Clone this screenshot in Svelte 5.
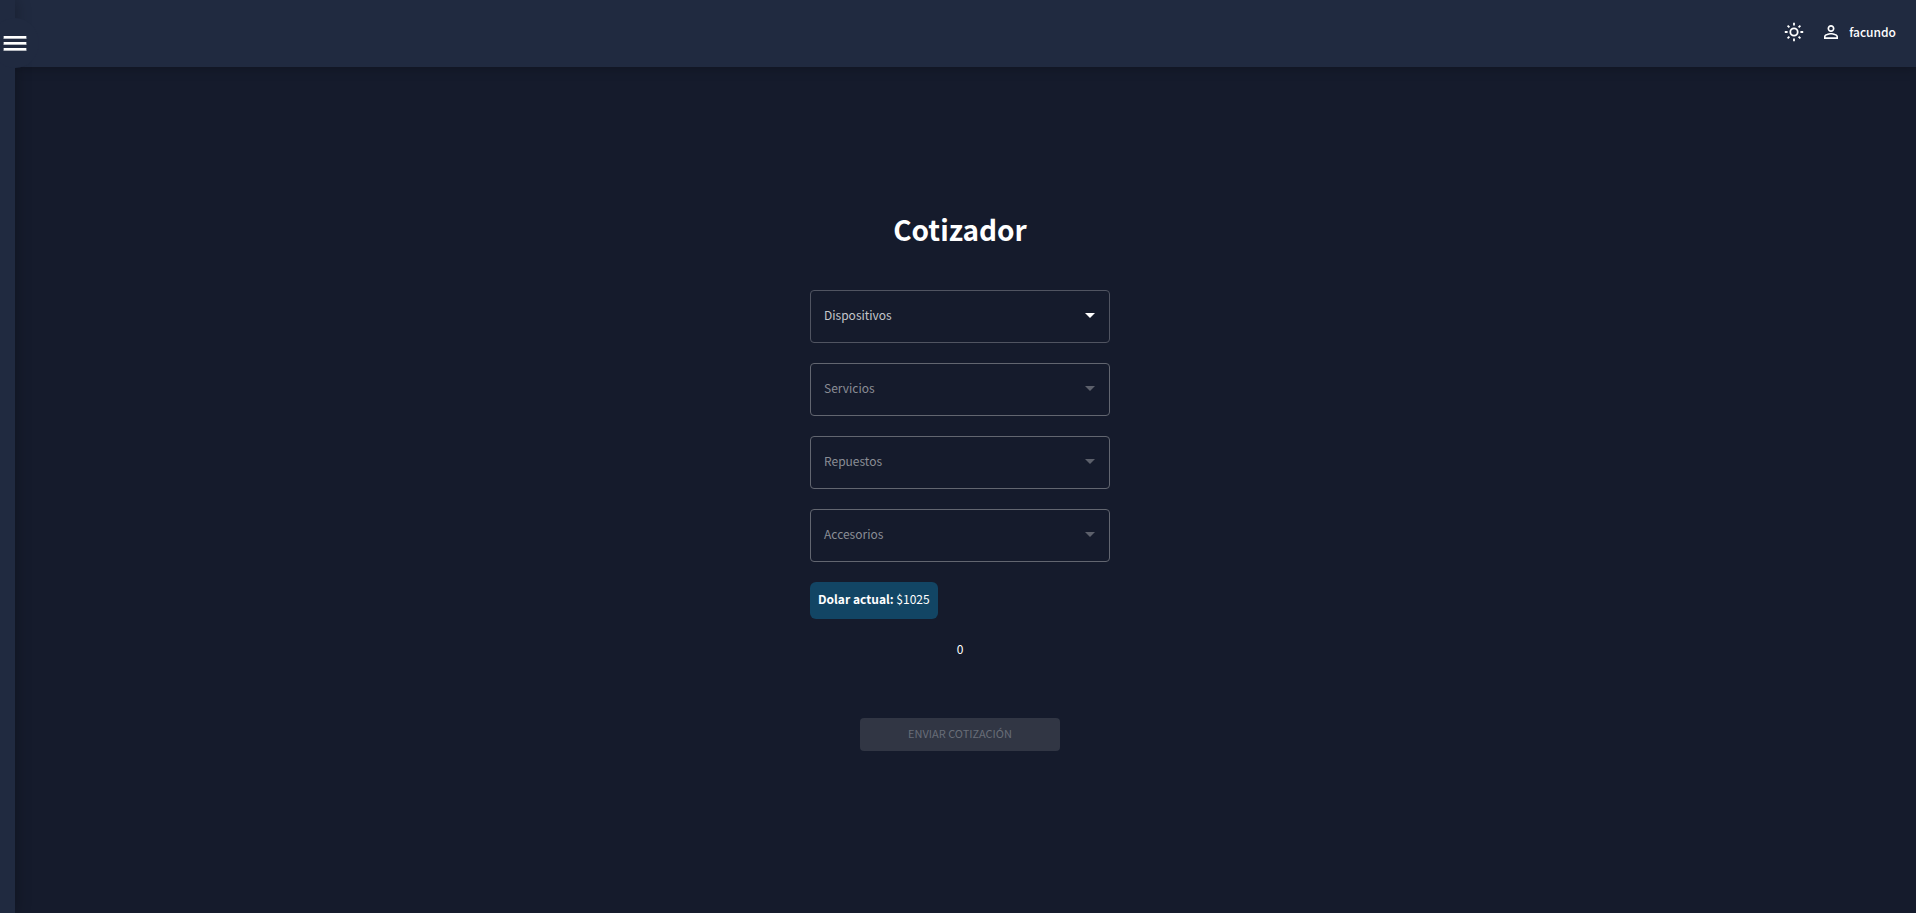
<script>
  const fields = [
    { id: 'dispositivos', label: 'Dispositivos', enabled: true },
    { id: 'servicios', label: 'Servicios', enabled: false },
    { id: 'repuestos', label: 'Repuestos', enabled: false },
    { id: 'accesorios', label: 'Accesorios', enabled: false }
  ];
  const dollar = 1025;
  let total = $state(0);
</script>

<div class="app">
  <aside class="sidebar">
    <button class="menu" type="button" aria-label="Menú">
      <svg viewBox="0 0 24 18" width="24" height="18" aria-hidden="true">
        <path d="M0 1h24v3H0zM0 7h24v3H0zM0 13h24v3H0z" fill="#fff" fill-opacity=".35" />
        <path d="M1 1h22v2.5H1zM1 7h22v2.5H1zM1 13h22v2.5H1z" fill="#fff" />
      </svg>
    </button>
  </aside>

  <div class="page">
    <header>
      <button class="icon" type="button" aria-label="Cambiar tema">
        <svg viewBox="0 0 20 20" width="20" height="20" fill="none" stroke="currentColor" stroke-width="1.8" aria-hidden="true">
          <circle cx="10" cy="10" r="3.7" />
          <path d="M10 .8v2.8M10 16.4v2.8M.8 10h2.8M16.4 10h2.8M3.6 3.6l1.8 1.8M14.6 14.6l1.8 1.8M3.6 16.4l1.8-1.8M14.6 5.4l1.8-1.8" />
        </svg>
      </button>
      <button class="user" type="button">
        <svg viewBox="4 4 16 16" width="14" height="14" fill="currentColor" aria-hidden="true">
          <path d="M12 5.9a2.1 2.1 0 1 1 0 4.2 2.1 2.1 0 0 1 0-4.2m0 9c2.97 0 6.1 1.46 6.1 2.1v1.1H5.9V17c0-.64 3.13-2.1 6.1-2.1M12 4C9.79 4 8 5.79 8 8s1.79 4 4 4 4-1.79 4-4-1.79-4-4-4m0 9c-2.67 0-8 1.34-8 4v3h16v-3c0-2.66-5.33-4-8-4" />
        </svg>
        <span>facundo</span>
      </button>
    </header>

    <main>
      <h1>Cotizador</h1>
      <form>
        {#each fields as field}
          <div class="field" class:disabled={!field.enabled}>
            <select id={field.id} disabled={!field.enabled}>
              <option value=""></option>
            </select>
            <label for={field.id}>{field.label}</label>
            <svg viewBox="0 0 10 5" width="10" height="5" fill="currentColor" aria-hidden="true">
              <path d="M0 0h10L5 5z" />
            </svg>
          </div>
        {/each}
        <p class="rate"><strong>Dolar actual:</strong> ${dollar}</p>
        <output>{total}</output>
        <button class="send" type="button" disabled>ENVIAR COTIZACIÓN</button>
      </form>
    </main>
  </div>
</div>

<style>
  :global(body) {
    margin: 0;
    background: #151b2c;
  }

  .app {
    display: flex;
    min-height: 100vh;
    color: #fff;
    font-family: "Noto Sans CJK JP", "Noto Sans", sans-serif;
    font-size: 12px;
    line-height: 20px;
  }

  button {
    padding: 0;
    border: 0;
    background: none;
    color: inherit;
    font: inherit;
  }

  svg {
    display: block;
  }

  .sidebar {
    position: relative;
    z-index: 2;
    flex: 0 0 15px;
    background: #202a40;
    box-shadow: 0 0 16px rgba(0, 0, 0, 0.3);
  }

  .menu {
    position: absolute;
    top: 18px;
    left: -9px;
    display: grid;
    place-items: center;
    width: 48px;
    height: 50px;
    border-radius: 50%;
    background: #202a40;
  }

  .menu svg {
    margin-top: 2px;
  }

  .page {
    display: flex;
    flex: 1;
    flex-direction: column;
    min-width: 0;
  }

  header {
    display: flex;
    align-items: center;
    justify-content: flex-end;
    gap: 20px;
    box-sizing: border-box;
    height: 67px;
    padding: 0 20px 4px 0;
    background: #202a40;
    box-shadow: 0 0 12px rgba(0, 0, 0, 0.3);
  }

  .user {
    display: flex;
    align-items: center;
    gap: 11px;
    font-weight: 500;
  }

  main {
    display: flex;
    flex: 1;
    flex-direction: column;
    align-items: center;
    padding: 139px 26px 40px 15px;
  }

  h1 {
    margin: 0 0 38px;
    font-size: 28px;
    font-weight: 600;
    line-height: 46px;
  }

  form {
    display: flex;
    flex-direction: column;
    gap: 20px;
    width: 300px;
    max-width: 100%;
  }

  .field {
    display: grid;
    grid-template-columns: 1fr auto;
    align-items: center;
    height: 53px;
  }

  select {
    grid-area: 1 / 1 / 2 / 3;
    box-sizing: border-box;
    width: 100%;
    height: 100%;
    padding: 0 14px;
    border: 1px solid #505461;
    border-radius: 4px;
    background: transparent;
    color: #fff;
    font: inherit;
    appearance: none;
    opacity: 1;
  }

  label {
    grid-area: 1 / 1;
    padding: 0 14px 4px;
    color: #c4c6ca;
    pointer-events: none;
  }

  .field svg {
    grid-area: 1 / 2;
    margin: 0 15px 2px 0;
    pointer-events: none;
  }

  .disabled select {
    border-color: #626670;
  }

  .disabled label {
    color: #8a8d95;
  }

  .disabled svg {
    color: #5c606b;
  }

  .rate {
    align-self: flex-start;
    box-sizing: border-box;
    height: 37px;
    margin: 0;
    padding: 7px 8px;
    border-radius: 6px;
    background: #124564;
  }

  .rate strong {
    font-weight: 600;
  }

  output {
    text-align: center;
  }

  .send {
    align-self: center;
    width: 200px;
    height: 33px;
    margin-top: 39px;
    padding-bottom: 4px;
    border-radius: 4px;
    background: #313644;
    color: #686d78;
    font-size: 11px;
  }
</style>
